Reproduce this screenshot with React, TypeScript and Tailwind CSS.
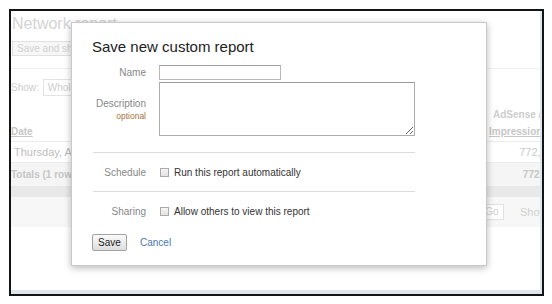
import React from 'react';

const font = { fontFamily: '"Liberation Sans", Arial, sans-serif' };

const Checkbox: React.FC = () => (
  <span className="inline-block w-[9px] h-[9px] border border-[#a9a9a9] bg-gradient-to-b from-[#f6f6f6] to-[#e2e2e2] shrink-0" />
);

const BackgroundPage: React.FC = () => (
  <div className="w-[548px] text-[#c4c4c4]">
    {/* title + actions */}
    <div className="h-[26px] pl-[1px] pt-[3px] text-[16px] leading-[20px] text-[#d4d4d4]">Network report</div>
    <div className="h-[22px] pl-[1px] pt-[4px]">
      <div className="w-[110px] h-[15px] border border-[#e0e0e0] bg-[#f7f7f7] pl-[4px] text-[10px] leading-[13px] text-[#cfcfcf]">
        Save and share
      </div>
    </div>
    <div className="h-[10px] border-b border-[#efefef]" />
    <div className="h-[8px]" />
    {/* show filter */}
    <div className="h-[20px] flex items-center gap-[4px] text-[10px] text-[#cdcdcd]">
      <span>Show:</span>
      <div className="w-[90px] h-[17px] border border-[#e3e3e3] pl-[4px] leading-[15px]">Whole account</div>
    </div>
    <div className="h-[9px]" />
    {/* table header */}
    <div className="h-[16px] flex justify-between items-center text-[10px] font-bold text-[#cdcdcd]">
      <span />
      <span className="w-[66px]">AdSense /</span>
    </div>
    <div className="h-[20px] flex justify-between items-center text-[10px] font-bold text-[#c6c6c6] underline border-b border-[#ececec]">
      <span>Date</span>
      <span className="w-[70px]">Impressions</span>
    </div>
    {/* rows */}
    <div className="h-[21px] flex justify-between items-center text-[11px] text-[#bdbdbd] border-b border-[#ececec]">
      <span className="pl-[3px]">Thursday, April 3, 2014</span>
      <span className="w-[69px] text-right text-[#cbcbcb]">772,233</span>
    </div>
    <div className="h-[24px] flex justify-between items-center text-[10px] font-bold text-[#c6c6c6] bg-[#f5f5f5] border-b border-[#e8e8e8]">
      <span>Totals (1 row)</span>
      <span className="w-[69px] text-right">772,233</span>
    </div>
    <div className="h-[10px] bg-[#e9e9e9]" />
    {/* pager */}
    <div className="h-[30px] flex justify-end items-center bg-[#f7f7f7] text-[11px] text-[#cfcfcf]">
      <div className="w-[24px] h-[16px] border border-[#e1e1e1] bg-white text-[10px] text-center leading-[14px]">Go</div>
      <span className="w-[55px] pl-[16px]">Show</span>
    </div>
  </div>
);

const SaveDialog: React.FC = () => (
  <div className="absolute left-[60px] top-[11px] w-[416px] h-[244px] bg-white border border-[#c9c9c9] shadow-[0_2px_7px_rgba(0,0,0,0.28)] pl-[20px] pt-[15px]">
    <h2 className="text-[15px] leading-[18px] text-[#222]">Save new custom report</h2>

    <div className="mt-[9px] flex items-center h-[15px]">
      <label className="w-[54px] text-right text-[10px] text-[#888]">Name</label>
      <input className="ml-[13px] w-[122px] h-[15px] border border-[#b8b8b8] border-t-[#9c9c9c] outline-none" />
    </div>

    <div className="mt-[2px] flex items-start">
      <div className="w-[54px] pt-[16px] text-right leading-[12px]">
        <div className="text-[10px] text-[#888]">Description</div>
        <div className="text-[8.5px] text-[#a5733f]">optional</div>
      </div>
      <textarea className="ml-[13px] w-[256px] h-[54px] border border-[#adadad] border-t-[#999] outline-none resize" />
    </div>

    <div className="mt-[16px] ml-[1px] w-[322px] border-t border-[#dcdcdc]" />

    <div className="h-[38px] flex items-center">
      <span className="w-[54px] text-right text-[10px] text-[#888]">Schedule</span>
      <span className="ml-[14px] flex items-center gap-[5px] text-[10px] text-[#333]">
        <Checkbox />
        Run this report automatically
      </span>
    </div>

    <div className="ml-[1px] w-[322px] border-t border-[#dcdcdc]" />

    <div className="h-[39px] flex items-center">
      <span className="w-[54px] text-right text-[10px] text-[#888]">Sharing</span>
      <span className="ml-[14px] flex items-center gap-[5px] text-[10px] text-[#333]">
        <Checkbox />
        Allow others to view this report
      </span>
    </div>

    <div className="mt-[3px] flex items-center">
      <button className="w-[35px] h-[17px] border border-[#a3a3a3] rounded-[2px] bg-gradient-to-b from-[#fafafa] to-[#dedede] text-[10px] text-[#222]">
        Save
      </button>
      <span className="ml-[13px] text-[10px] text-[#4a78b0]">Cancel</span>
    </div>
  </div>
);

const App: React.FC = () => {
  return (
    <div className="w-[552px] h-[304px] bg-white pl-[9px] pt-[9px]" style={font}>
      <div className="relative w-[535px] h-[287px] border-2 border-[#141414] bg-white overflow-hidden">
        <div className="w-full h-full border-r-2 border-b-[4px] border-[#dfe5ec] overflow-hidden">
          <BackgroundPage />
        </div>
        <SaveDialog />
      </div>
    </div>
  );
};

export default App;
